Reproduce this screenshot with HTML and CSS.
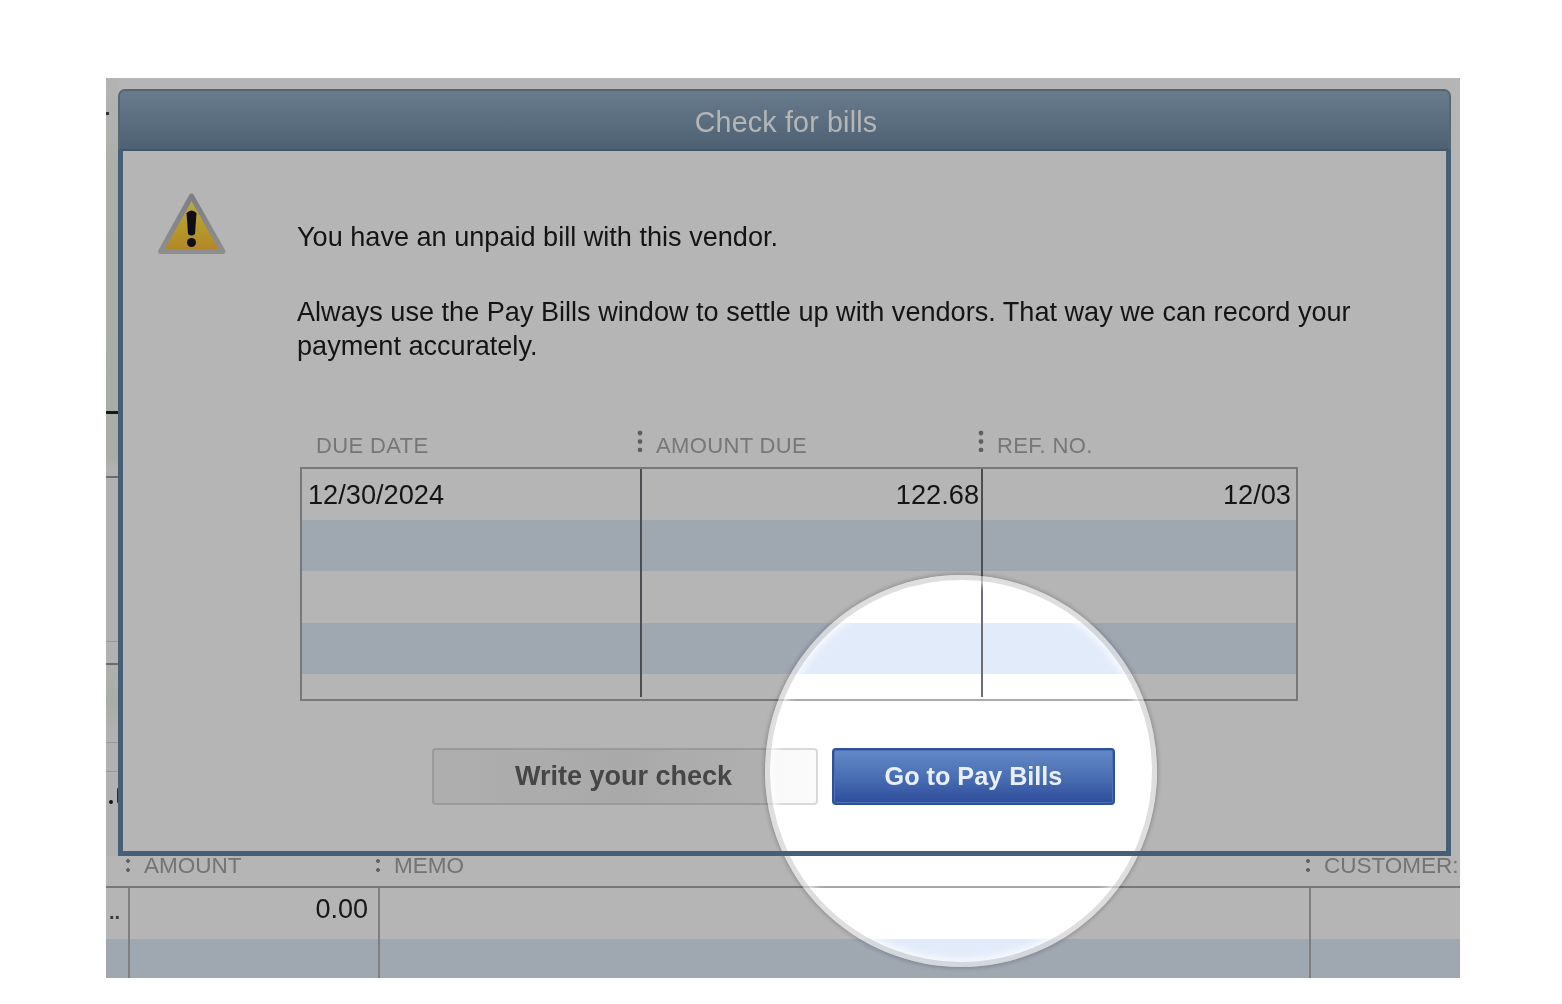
FILE: index.html
```html
<!DOCTYPE html>
<html lang="en">
<head>
<meta charset="utf-8">
<title>Check for bills</title>
<link rel="stylesheet" href="styles.css">
</head>
<body>
<main class="stage">
  <section class="backdrop">
    <div class="rail">
      <span class="tick tick-dot"></span>
      <span class="tick tick-black"></span>
      <span class="tick tick-grey-a"></span>
      <span class="tick tick-faint-a"></span>
      <span class="tick tick-grey-b"></span>
      <span class="tick tick-faint-b"></span>
      <span class="tick tick-faint-c"></span>
      <div class="tick-group">
        <span class="tick-point"></span>
        <span class="tick-mark"></span>
      </div>
    </div>
    <div class="bill-head">
      <span class="bill-h"><i class="colon"></i>AMOUNT</span>
      <span class="bill-h"><i class="colon"></i>MEMO</span>
      <span class="bill-h"><i class="colon"></i>CUSTOMER:</span>
    </div>
    <div class="bill-row">
      <span class="bill-cell bill-more">..</span>
      <span class="bill-cell bill-value">0.00</span>
      <span class="bill-cell"></span>
      <span class="bill-cell"></span>
    </div>
    <div class="bill-row bill-row-alt">
      <span class="bill-cell"></span>
      <span class="bill-cell"></span>
      <span class="bill-cell"></span>
      <span class="bill-cell"></span>
    </div>
  </section>

  <section class="dialog">
    <header class="titlebar">Check for bills</header>
    <div class="dialog-body">
      <div class="message">
        <svg class="warn" viewBox="0 0 70 64" aria-hidden="true">
          <defs>
            <linearGradient id="warnFill" x1="0" y1="0" x2="0" y2="1">
              <stop offset="0" stop-color="#fff27a"/>
              <stop offset="0.55" stop-color="#ffd83a"/>
              <stop offset="1" stop-color="#fbbd3c"/>
            </linearGradient>
            <linearGradient id="warnEdge" x1="0" y1="0" x2="0" y2="1">
              <stop offset="0" stop-color="#b4b4ba"/>
              <stop offset="1" stop-color="#c8c8cc"/>
            </linearGradient>
          </defs>
          <path d="M34.5 4 L66 59.5 L3.5 59.5 Z" fill="url(#warnFill)" stroke="url(#warnEdge)" stroke-width="5" stroke-linejoin="round"/>
          <path d="M29.5 21 Q34.5 16 39.5 21 L38 42 Q34.5 45 31 42 Z" fill="#15151f"/>
          <circle cx="34.5" cy="50.5" r="4.5" fill="#15151f"/>
        </svg>
        <div class="copy">
          <p class="lead">You have an unpaid bill with this vendor.</p>
          <p class="detail">Always use the Pay Bills window to settle up with vendors. That way we can record your payment accurately.</p>
        </div>
      </div>

      <div class="table-wrap">
        <div class="thead">
          <span class="th">DUE DATE</span>
          <span class="th"><i class="grip"></i>AMOUNT DUE</span>
          <span class="th"><i class="grip"></i>REF. NO.</span>
        </div>
        <div class="tbody">
          <div class="tr"><span class="td">12/30/2024</span><span class="td td-num">122.68</span><span class="td td-ref">12/03</span></div>
          <div class="tr tr-alt"><span class="td"></span><span class="td"></span><span class="td"></span></div>
          <div class="tr"><span class="td"></span><span class="td"></span><span class="td"></span></div>
          <div class="tr tr-alt"><span class="td"></span><span class="td"></span><span class="td"></span></div>
          <div class="tr tr-end"><span class="td"></span><span class="td"></span><span class="td"></span></div>
        </div>
      </div>

      <div class="actions">
        <button class="btn btn-secondary" type="button">Write your check</button>
        <button class="btn btn-primary" type="button">Go to Pay Bills</button>
      </div>
    </div>
  </section>

  <div class="spotlight"></div>
  <div class="dialog-frame"></div>
</main>
</body>
</html>
```
FILE: styles.css
```css
* { box-sizing: border-box; }

html, body { margin: 0; background: #fff; }

body {
  padding: 78px 102px 26px 106px;
  height: 1004px;
  overflow: hidden;
  font-family: "Liberation Sans", Arial, sans-serif;
}

.stage {
  position: relative;
  width: 1354px;
  height: 900px;
  overflow: hidden;
  background: #fff;
  filter: blur(0.6px);
}

/* window behind the dialog */
.backdrop { display: flex; flex-direction: column; height: 100%; }

.rail {
  flex: none;
  height: 778px;
  width: 12px;
  display: flex;
  flex-direction: column;
  align-items: flex-start;
  background: linear-gradient(#fdfdfb 0, #f2f6ee 12%, #eef4ea 49%, #fbfafa 50%, #fbfafa 74%, #eef4ea 80%, #fbfafa 84%);
}

.tick { display: block; flex: none; width: 12px; height: 2px; }
.tick-dot { width: 3px; height: 3px; margin-top: 34px; background: #444; }
.tick-black { height: 3px; margin-top: 296px; background: #222; }
.tick-grey-a { margin-top: 62px; background: #999; }
.tick-faint-a { height: 1px; margin-top: 163px; background: #d5d5d5; }
.tick-grey-b { margin-top: 21px; background: #999; }
.tick-faint-b { height: 1px; margin-top: 77px; background: #d5d5d5; }
.tick-faint-c { height: 1px; margin-top: 28px; background: #d5d5d5; }

.tick-group { display: flex; align-items: flex-end; gap: 4px; margin-top: 15px; padding-left: 3px; }
.tick-point { width: 4px; height: 4px; border-radius: 50%; background: #1c1c1c; }
.tick-mark { width: 4px; height: 17px; background: #6b2a1c; border-radius: 3px 0 0 3px; }

.bill-head {
  flex: none;
  display: grid;
  grid-template-columns: 250px 930px 1fr;
  padding: 0 0 0 20px;
  height: 32px;
  border-bottom: 2px solid #a8a8a8;
  font-size: 22.5px;
  color: #a4a4a4;
}

.bill-h { display: flex; align-items: center; height: 18px; margin-top: 1px; white-space: nowrap; }

.colon {
  display: block;
  flex: none;
  width: 4px;
  height: 14px;
  margin-right: 14px;
  background: radial-gradient(circle at 2px 2px, #8f8f8f 1.8px, transparent 2.2px) 0 0 / 4px 9px repeat-y;
}

.bill-row {
  flex: none;
  display: grid;
  grid-template-columns: 24px 250px 931px 1fr;
  height: 51px;
}

.bill-row-alt { background: #e1ebfa; }

.bill-cell { border-right: 2px solid #b4b4b4; }
.bill-cell:last-child { border-right: 0; }
.bill-more { font-size: 20px; line-height: 48px; padding-left: 3px; color: #555; font-weight: bold; }
.bill-value { font-size: 27px; line-height: 43px; text-align: right; padding-right: 10px; color: #222; }

/* dialog */
.dialog {
  position: absolute;
  left: 12px;
  top: 11px;
  width: 1333px;
  height: 767px;
  display: flex;
  flex-direction: column;
  border: 5px solid transparent;
  border-top: 0;
  border-radius: 7px 7px 0 0;
  background: #fff;
}

.titlebar {
  flex: none;
  height: 62px;
  margin: 0 -5px;
  border-radius: 7px 7px 0 0;
  border: 2px solid #7d90a4;
  border-bottom-color: #60798f;
  background: linear-gradient(#93afc8, #6e89a3);
  color: #fff;
  font-size: 28.6px;
  letter-spacing: 0.2px;
  line-height: 62px;
  text-align: center;
  padding-left: 3px;
}

.dialog-frame {
  position: absolute;
  left: 12px;
  top: 72px;
  width: 1333px;
  height: 706px;
  border: 5px solid #465f78;
  border-top: 0;
}

.dialog-body { flex: 1; display: flex; flex-direction: column; padding: 41px 0 0 34px; }

.message { flex: none; display: flex; align-items: flex-start; height: 238px; }

.warn { width: 70px; height: 64px; flex: none; }

.copy { margin: 28px 0 0 70px; width: 1075px; color: #1d1d1f; font-size: 27.1px; line-height: 34px; }
.copy p { margin: 0; }
.copy .detail { margin-top: 41px; }

.table-wrap { margin-left: 143px; width: 998px; }

.thead {
  display: grid;
  grid-template-columns: 340px 341px 1fr;
  height: 37px;
  padding-bottom: 5px;
  align-items: center;
  font-size: 22px;
  letter-spacing: 0.35px;
  color: #a8a8a8;
}

.th { display: flex; align-items: center; padding-left: 16px; position: relative; }

.grip {
  position: absolute;
  left: -3px;
  top: -3px;
  width: 6px;
  height: 22px;
  background: radial-gradient(circle at 3px 3px, #858585 2.1px, transparent 2.7px) 0 0 / 6px 8.5px repeat-y;
}

.tbody { border: 2px solid #aaa; height: 234px; display: flex; flex-direction: column; }

.tr { display: grid; grid-template-columns: 338px 341px 1fr; height: 51.2px; flex: none; }
.tr-alt { background: #e1ebfa; }
.tr-end { flex: 1; height: 22px; margin-bottom: 2px; background: #fff; }

.td { font-size: 27.2px; line-height: 51px; padding: 0 6px; color: #1d1d1f; border-left: 2px solid #6a6e74; }
.td:first-child { border-left: 0; }
.td-num { text-align: right; padding-right: 2px; }
.td-ref { text-align: right; padding-right: 5px; }

.actions { flex: none; display: flex; gap: 14px; margin: 47px 0 0 275px; }

.btn {
  height: 57px;
  padding: 0;
  font-family: inherit;
  font-size: 27px;
  font-weight: bold;
  border-radius: 4px;
}

.btn-secondary {
  width: 386px;
  border: 2px solid #dadada;
  background: linear-gradient(90deg, #f6f6f6 0, #efefef 50%, #fbfbfb 100%);
  color: #636363;
  padding-right: 3px;
}

.btn-primary {
  width: 283px;
  border: 2px solid #2e5199;
  background: linear-gradient(#6489c7, #4a6fb4 50%, #2f4c9b);
  color: #e9f0fc;
  font-size: 25.2px;
  box-shadow: inset 0 0 0 1px #4d70b3;
}

/* magnifier */
.spotlight {
  position: absolute;
  left: 659px;
  top: 497px;
  width: 392px;
  height: 392px;
  border-radius: 50%;
  border: 5px solid rgba(205, 205, 205, 0.65);
  box-shadow: 0 0 0 2000px rgba(0, 0, 0, 0.29), 0 0 4px 1px rgba(60, 60, 60, 0.3), inset 0 0 8px 3px rgba(255, 255, 255, 0.85);
}
```
